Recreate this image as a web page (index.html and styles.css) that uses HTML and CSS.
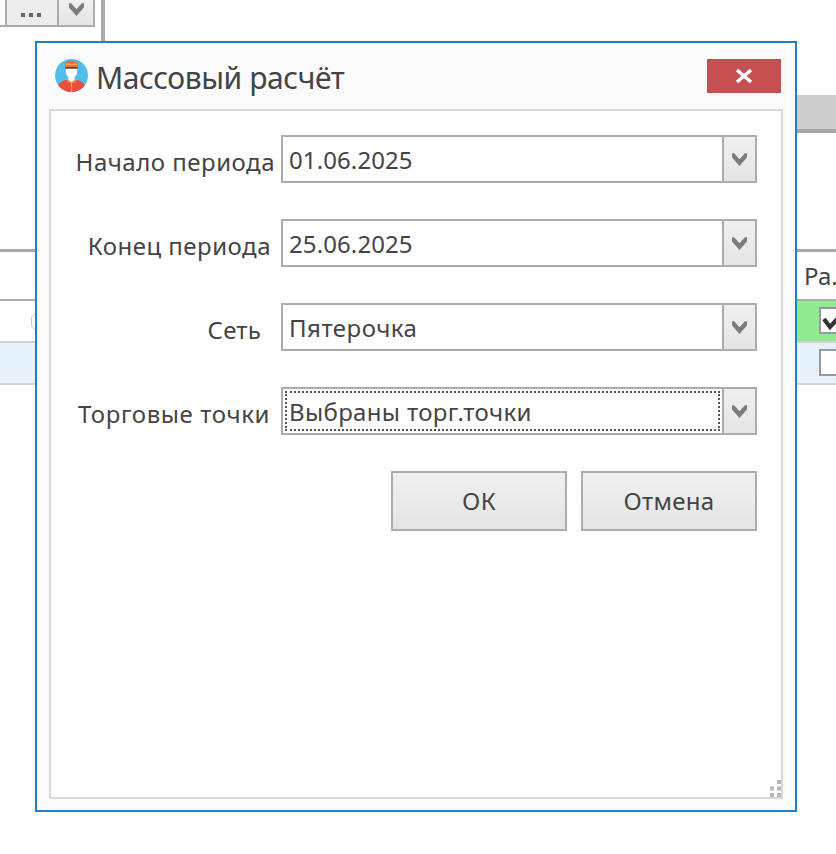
FILE: index.html
```html
<!DOCTYPE html>
<html lang="ru">
<head>
<meta charset="utf-8">
<title>Массовый расчёт</title>
<link rel="stylesheet" href="styles.css">
</head>
<body>
<svg class="defs" width="0" height="0"><symbol id="chevron" viewBox="0 0 16 14"><path d="M1 1V5L8 13L15 5V1H13L8 6.800L3 1Z" fill="#7c7c7c"/></symbol></svg>
<main class="app">
  <div class="toolbar">
    <div class="lookup"><span class="lookup-edge"></span><span class="dots"><i></i><i></i><i></i></span><span class="drop"><svg class="chevron"><use href="#chevron"/></svg></span></div>
    <div class="divider"></div>
  </div>
  <div class="band"></div>
  <div class="grid">
    <div class="head"><span>Ра.</span></div>
    <div class="row"><div class="cell-left"><span class="pill"></span></div><div class="cell green"><span class="check"><svg width="22" height="18" viewBox="0 0 22 18"><path d="M2 4L8 12L19 0" fill="none" stroke="#333" stroke-width="4.200"/></svg></span></div></div>
    <div class="row blue"><div class="cell-left"></div><div class="cell"><span class="check"></span></div></div>
  </div>
</main>
<section class="dialog">
  <header class="titlebar">
    <svg class="logo" viewBox="0 0 32 32"><defs><clipPath id="disc"><circle cx="16" cy="16" r="16"/></clipPath></defs><g clip-path="url(#disc)"><path d="M0 0H32V32H0Z" fill="#50bdea"/><path d="M3 32V26Q4 22 11 20L16 22L21 20Q28 22 29 26V32Z" fill="#ef4b3f"/><path d="M13 15H19V20L16 22.500L13 20Z" fill="#fff"/><path d="M10.500 9H21.500V13Q20.500 18 16 18Q11.500 18 10.500 13Z" fill="#fff"/><path d="M10 8V4Q11 2 16 2Q21 2 22 4V8Z" fill="#e86a3a"/><path d="M10.500 5.200H21.500" stroke="#f7a345" stroke-width="1.500"/><path d="M10 8.600H22" stroke="#713d43" stroke-width="1.800"/><path d="M11.500 19.500L13 22L16 22.800L19 22L20.500 19.500M16 23V32" fill="none" stroke="#f7a33b" stroke-width="1.200"/></g></svg>
    <h1>Массовый расчёт</h1>
    <button class="close" aria-label="Закрыть"><svg width="18" height="14" viewBox="0 0 18 14"><path d="M2 1L16 13M16 1L2 13" stroke="#fff" stroke-width="3.400"/></svg></button>
  </header>
  <form class="panel">
    <div class="field"><label class="l1">Начало периода</label><div class="combo"><span class="value">01.06.2025</span><span class="drop"><svg class="chevron"><use href="#chevron"/></svg></span></div></div>
    <div class="field"><label class="l2">Конец периода</label><div class="combo"><span class="value">25.06.2025</span><span class="drop"><svg class="chevron"><use href="#chevron"/></svg></span></div></div>
    <div class="field"><label class="l3">Сеть</label><div class="combo"><span class="value wide">Пятерочка</span><span class="drop"><svg class="chevron"><use href="#chevron"/></svg></span></div></div>
    <div class="field"><label class="l4">Торговые точки</label><div class="combo"><span class="value focus">Выбраны торг.точки</span><span class="drop"><svg class="chevron"><use href="#chevron"/></svg></span></div></div>
    <div class="actions"><button type="button">ОК</button><button type="button">Отмена</button></div>
    <svg class="grip" width="11" height="17" viewBox="0 0 11 17" fill="#b8b8b8"><path d="M7 0h4v4H7zM0 6.500h4v4H0zM7 6.500h4v4H7zM0 13h4v4H0zM7 13h4v4H7z"/></svg>
  </form>
</section>
</body>
</html>
```
FILE: styles.css
```css
* { box-sizing: border-box; }
body { margin: 0; width: 836px; height: 854px; overflow: hidden; position: relative; background: #fff; color: #444; font: 24px/34px "Noto Sans", "Open Sans", sans-serif; }
.defs { position: absolute; }
.app { display: flex; flex-direction: column; }
.toolbar { height: 95px; display: flex; align-items: flex-start; }
.lookup { display: flex; width: 95px; height: 27px; border: solid #acacac; border-width: 0 2px 2px 0; background: #ededed; }
.lookup-edge { width: 7px; background: #fff; border-right: 2px solid #acacac; }
.dots { flex: 1; display: flex; gap: 4px; padding: 13px 0 0 14px; }
.dots i { width: 4px; height: 4px; background: #666; }
.lookup .drop { width: 36px; padding-bottom: 7px; }
.divider { width: 4px; height: 60px; margin-left: 6px; background: #aaa; }
.drop { width: 33px; display: flex; align-items: center; justify-content: center; border-left: 2px solid #acacac; background: linear-gradient(#f0f0f0, #e5e5e5); }
.chevron { width: 17px; height: 15px; }
.band { width: 100px; height: 38px; margin-left: auto; background: #cdcdcd; border-bottom: 4px solid #a6a6a6; }
.grid { margin-top: 116px; border-top: 3px solid #a6a6a6; }
.head { height: 49px; padding: 7px 0 0 804px; border-bottom: 2px solid #acacac; white-space: nowrap; }
.row { height: 42px; display: flex; justify-content: space-between; border-bottom: 2px solid #d3d3d3; }
.blue { background: #e5f1fb; }
.cell-left { width: 60px; padding: 12px 0 0 31px; }
.pill { display: block; width: 20px; height: 17px; border: 1px solid #b5c9df; border-radius: 6px; }
.cell { width: 60px; padding: 6px 0 0 43px; }
.green { background: #90ea90; }
.check { display: block; width: 28px; height: 27px; padding: 6px 0 0 1px; border: 2px solid #999; background: #fff; }
.check svg { display: block; }
.dialog { position: absolute; left: 35px; top: 41px; width: 762px; height: 771px; padding: 0 12px 11px; border: 2px solid #1e7ec8; background: #fbfbfb; display: flex; flex-direction: column; }
.titlebar { height: 66px; display: flex; align-items: flex-start; padding: 16px 2px 0 6px; }
.logo { width: 33px; height: 33px; flex: none; }
h1 { margin: 0 auto 0 8px; font-size: 30px; line-height: 38px; font-weight: 400; letter-spacing: -.4px; white-space: nowrap; }
.close { width: 74px; height: 34px; padding: 0; border: 0; background: #c55052; display: grid; place-items: center; }
.panel { position: relative; flex: 1; border: 2px solid #d9d9d9; background: #fff; padding: 24px 24px 0; display: flex; flex-direction: column; }
.field { height: 84px; display: flex; justify-content: flex-end; align-items: flex-start; }
label { padding-top: 10px; letter-spacing: .5px; white-space: nowrap; }
.combo { width: 476px; height: 48px; flex: none; border: 2px solid #acacac; display: flex; }
.value { flex: 1; padding: 6px 0 0 6px; letter-spacing: .1px; white-space: nowrap; }
.wide { letter-spacing: .5px; }
.focus { margin: 2px; padding: 2px 0 0 2px; border: 2px dotted #555; letter-spacing: .33px; }
.l1 { margin-right: 6px; }
.l2 { margin-right: 10px; }
.l3 { margin-right: 20px; letter-spacing: .2px; }
.l4 { margin-right: 11px; letter-spacing: .6px; }
.actions { display: flex; justify-content: flex-end; gap: 14px; }
.actions button { width: 176px; height: 60px; padding: 0; border: 2px solid #acacac; background: linear-gradient(#f0f0f0, #e5e5e5); color: #444; font: inherit; letter-spacing: .3px; }
.grip { position: absolute; right: 0; bottom: 0; }
```
